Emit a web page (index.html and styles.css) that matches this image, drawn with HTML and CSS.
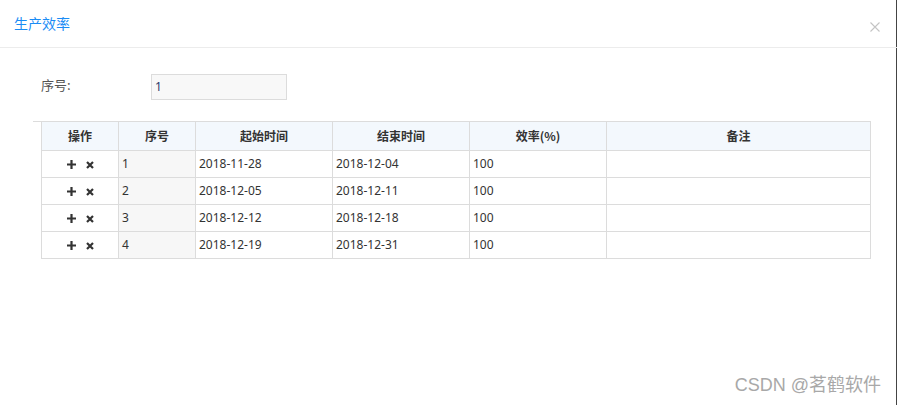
FILE: index.html
```html
<!DOCTYPE html>
<html lang="zh">
<head>
<meta charset="utf-8">
<title>生产效率</title>
<link rel="stylesheet" href="styles.css">
</head>
<body>
<div class="dialog">
  <div class="dlg-head">
    <span class="dlg-title">生产效率</span>
    <span class="dlg-close">
      <svg width="10" height="10" viewBox="0 0 10 10"><path d="M0.5 0.5L9.5 9.5M9.5 0.5L0.5 9.5" stroke="#c4c4c4" stroke-width="1.1" fill="none"/></svg>
    </span>
  </div>
  <div class="dlg-body">
    <div class="form-row">
      <label class="form-label">序号:</label>
      <div class="form-input">1</div>
    </div>
    <div class="grid-wrap">
      <table class="grid">
        <colgroup>
          <col class="c-op"><col class="c-no"><col class="c-date"><col class="c-date"><col class="c-date"><col class="c-note">
        </colgroup>
        <thead>
          <tr><th>操作</th><th>序号</th><th>起始时间</th><th>结束时间</th><th>效率(%)</th><th>备注</th></tr>
        </thead>
        <tbody>
          <tr><td class="ops"><span class="ico-plus"><svg width="9" height="9" viewBox="0 0 9 9"><path d="M3.4 0h2.2v3.4H9v2.2H5.6V9H3.4V5.6H0V3.4h3.4z" fill="#333"/></svg></span><span class="ico-x"><svg width="8" height="8" viewBox="0 0 8 8"><path d="M1 1L7 7M7 1L1 7" stroke="#333" stroke-width="2.2" fill="none"/></svg></span></td><td class="no">1</td><td>2018-11-28</td><td>2018-12-04</td><td>100</td><td></td></tr>
          <tr><td class="ops"><span class="ico-plus"><svg width="9" height="9" viewBox="0 0 9 9"><path d="M3.4 0h2.2v3.4H9v2.2H5.6V9H3.4V5.6H0V3.4h3.4z" fill="#333"/></svg></span><span class="ico-x"><svg width="8" height="8" viewBox="0 0 8 8"><path d="M1 1L7 7M7 1L1 7" stroke="#333" stroke-width="2.2" fill="none"/></svg></span></td><td class="no">2</td><td>2018-12-05</td><td>2018-12-11</td><td>100</td><td></td></tr>
          <tr><td class="ops"><span class="ico-plus"><svg width="9" height="9" viewBox="0 0 9 9"><path d="M3.4 0h2.2v3.4H9v2.2H5.6V9H3.4V5.6H0V3.4h3.4z" fill="#333"/></svg></span><span class="ico-x"><svg width="8" height="8" viewBox="0 0 8 8"><path d="M1 1L7 7M7 1L1 7" stroke="#333" stroke-width="2.2" fill="none"/></svg></span></td><td class="no">3</td><td>2018-12-12</td><td>2018-12-18</td><td>100</td><td></td></tr>
          <tr><td class="ops"><span class="ico-plus"><svg width="9" height="9" viewBox="0 0 9 9"><path d="M3.4 0h2.2v3.4H9v2.2H5.6V9H3.4V5.6H0V3.4h3.4z" fill="#333"/></svg></span><span class="ico-x"><svg width="8" height="8" viewBox="0 0 8 8"><path d="M1 1L7 7M7 1L1 7" stroke="#333" stroke-width="2.2" fill="none"/></svg></span></td><td class="no">4</td><td>2018-12-19</td><td>2018-12-31</td><td>100</td><td></td></tr>
        </tbody>
      </table>
    </div>
  </div>
  <div class="watermark">CSDN @茗鹤软件</div>
</div>
</body>
</html>
```

FILE: styles.css
```css
html, body {
  margin: 0;
  padding: 0;
  background: #fff;
}
body {
  font-family: "Noto Sans", "Noto Sans CJK SC", sans-serif;
  font-size: 12px;
  color: #333;
}
.dialog {
  position: relative;
  width: 896px;
  height: 405px;
  border-right: 1px solid #444;
  box-sizing: content-box;
}
.dlg-head {
  height: 48px;
  border-bottom: 1px solid #ececec;
  display: flex;
  align-items: center;
  justify-content: space-between;
  padding: 0 17px 0 14px;
  box-sizing: border-box;
  width: 897px;
}
.dlg-title {
  font-family: "Noto Sans CJK SC", sans-serif;
  font-size: 14px;
  color: #1a8cf5;
  line-height: 20px;
  margin-top: -2px;
}
.dlg-close {
  display: flex;
  margin-top: 6px;
}
.dlg-body {
  padding: 26px 0 0 0;
}
.form-row {
  display: flex;
  align-items: center;
  height: 26px;
  padding-left: 41px;
}
.form-label {
  width: 110px;
  font-family: "Noto Sans CJK SC", sans-serif;
  font-size: 13px;
  color: #555;
  margin-top: -5px;
}
.form-input {
  width: 131px;
  height: 24px;
  border: 1px solid #dcdcdc;
  background: #f8f8f8;
  line-height: 24px;
  padding-left: 3px;
  box-sizing: content-box;
  color: #2a3a6a;
  font-size: 12px;
}
.grid-wrap {
  margin: 21px 0 0 33px;
  width: 838px;
  border-top: 1px solid #dcdcdc;
  padding-left: 8px;
  box-sizing: border-box;
}
.grid {
  border-collapse: collapse;
  table-layout: fixed;
  width: 830px;
}
.grid col.c-op { width: 77px; }
.grid col.c-no { width: 77px; }
.grid col.c-date { width: 137px; }
.grid col.c-note { width: auto; }
.grid th, .grid td {
  border: 1px solid #dcdcdc;
  padding: 0 3px;
  font-size: 12px;
  line-height: 16px;
  white-space: nowrap;
  overflow: hidden;
}
.grid thead tr:first-child th {
  border-top: none;
}
.grid th {
  height: 28px;
  background: #f3f8fd;
  font-family: "Noto Sans CJK SC", sans-serif;
  font-weight: bold;
  color: #333;
  text-align: center;
}
.grid td {
  height: 26px;
  color: #333;
  text-align: left;
}
.grid td.no {
  background: #f7f7f7;
}
.grid td.ops {
  text-align: center;
}
.ico-plus, .ico-x {
  display: inline-block;
  vertical-align: middle;
  line-height: 0;
}
.ico-plus {
  margin-right: 10px;
}
.watermark {
  position: absolute;
  right: 15px;
  bottom: 9px;
  font-family: "Liberation Sans", "Noto Sans CJK SC", sans-serif;
  font-size: 18px;
  color: #a8a8a8;
}
```
